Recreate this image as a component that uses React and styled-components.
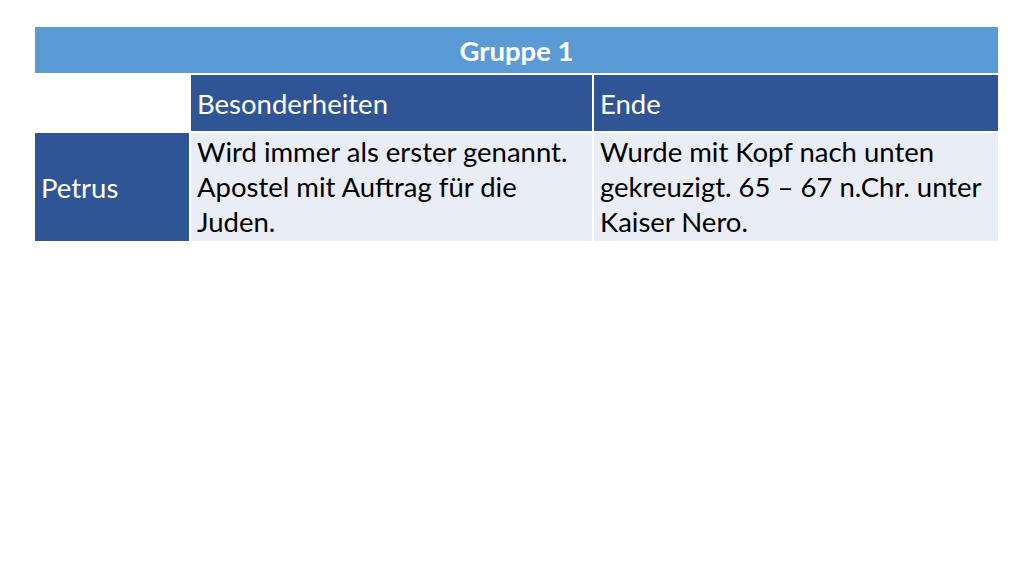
import React from "react";
import styled, { createGlobalStyle } from "styled-components";

const GlobalStyle = createGlobalStyle`
  html, body {
    margin: 0;
    padding: 0;
    background: #ffffff;
  }
`;

const Slide = styled.div`
  width: 1024px;
  height: 576px;
  box-sizing: border-box;
  padding: 27px 0 0 35px;
  background: #ffffff;
  font-family: Lato, "Open Sans", sans-serif;
`;

const Table = styled.div`
  display: grid;
  grid-template-columns: 154px 401px 404px;
  grid-template-rows: 46px 56px 108px;
  gap: 2px;
  width: 963px;
`;

const TitleCell = styled.div`
  grid-column: 1 / 4;
  background: #5b9bd5;
  color: #ffffff;
  font-weight: 700;
  font-size: 27.5px;
  display: flex;
  align-items: center;
  justify-content: center;
`;

const Cell = styled.div`
  box-sizing: border-box;
  padding: ${(p) => (p.$top ? "1px 6px 0" : "0 6px")};
  display: flex;
  align-items: ${(p) => (p.$top ? "flex-start" : "center")};
  font-size: 27.5px;
  line-height: 35px;
  background: ${(p) =>
    p.$variant === "dark" ? "#2f5597" : p.$variant === "light" ? "#e9edf5" : "#ffffff"};
  color: ${(p) => (p.$variant === "dark" ? "#ffffff" : "#000000")};
`;

export default function App() {
  return (
    <>
      <GlobalStyle />
      <Slide>
        <Table>
          <TitleCell>Gruppe 1</TitleCell>
          <Cell />
          <Cell $variant="dark">Besonderheiten</Cell>
          <Cell $variant="dark">Ende</Cell>
          <Cell $variant="dark">Petrus</Cell>
          <Cell $variant="light" $top>
            Wird immer als erster genannt. Apostel mit Auftrag für die Juden.
          </Cell>
          <Cell $variant="light" $top>
            Wurde mit Kopf nach unten gekreuzigt. 65 – 67 n.Chr. unter Kaiser Nero.
          </Cell>
        </Table>
      </Slide>
    </>
  );
}
